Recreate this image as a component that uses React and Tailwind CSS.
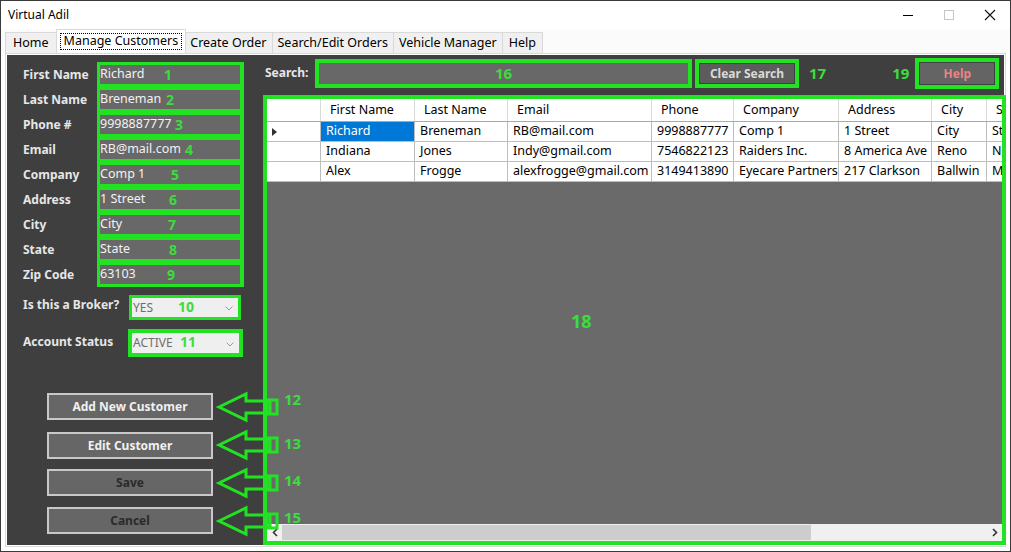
import React from "react";

const G = "border-[#22e322]";

const fields = [
  ["First Name", "Richard", "1", "left-[64px]"],
  ["Last Name", "Breneman", "2", "left-[66px]"],
  ["Phone #", "9998887777", "3", "left-[75px]"],
  ["Email", "RB@mail.com", "4", "left-[85px]"],
  ["Company", "Comp 1", "5", "left-[71px]"],
  ["Address", "1 Street", "6", "left-[69px]"],
  ["City", "City", "7", "left-[68px]"],
  ["State", "State", "8", "left-[69px]"],
  ["Zip Code", "63103", "9", "left-[67px]"],
];

const cols = [
  ["First Name", "w-[94px]"],
  ["Last Name", "w-[93px]"],
  ["Email", "w-[144px]"],
  ["Phone", "w-[82px]"],
  ["Company", "w-[105px]"],
  ["Address", "w-[93px]"],
  ["City", "w-[55px]"],
  ["State", "w-[60px]"],
];

const rows = [
  ["Richard", "Breneman", "RB@mail.com", "9998887777", "Comp 1", "1 Street", "City", "State"],
  ["Indiana", "Jones", "Indy@gmail.com", "7546822123", "Raiders Inc.", "8 America Ave", "Reno", "Nevada"],
  ["Alex", "Frogge", "alexfrogge@gmail.com", "3149413890", "Eyecare Partners", "217 Clarkson", "Ballwin", "MO"],
];

function Arrow({ cy }) {
  return (
    <g fill="none" stroke="#22e322" strokeWidth="3" strokeLinejoin="miter">
      <polygon points={`6,${cy} 33,${cy - 13} 33,${cy - 6} 57,${cy - 6} 57,${cy + 6} 33,${cy + 6} 33,${cy + 13}`} />
      <rect x="54" y={cy - 7} width="10" height="14" />
    </g>
  );
}

export default function App() {
  return (
    <div className="w-[1011px] h-[552px] bg-white border border-[#3a3a3a] flex flex-col relative overflow-hidden font-['Noto_Sans',sans-serif] text-black">
      {/* Title bar */}
      <div className="h-[28px] flex items-center justify-between shrink-0">
        <div className="pl-[7px] text-[12px] font-['Noto_Sans',sans-serif]">Virtual Adil</div>
        <div className="flex h-full">
          <div className="w-[41px] flex items-center justify-center">
            <div className="w-[10px] h-px bg-black" />
          </div>
          <div className="w-[41px] flex items-center justify-center">
            <div className="w-[10px] h-[10px] border border-[#c6c6c6]" />
          </div>
          <div className="w-[41px] flex items-center justify-center">
            <svg width="12" height="12" viewBox="0 0 12 12">
              <path d="M1 1 L11 11 M11 1 L1 11" stroke="#111" strokeWidth="1.1" />
            </svg>
          </div>
        </div>
      </div>
      {/* Tabs */}
      <div className="h-[24px] flex items-end pl-[4px] shrink-0 bg-[#fbfbfb] text-[12.5px] leading-none">
        <div className="h-[21px] px-[7px] flex items-center bg-[#f0f0f0] border border-b-0 border-[#d9d9d9]">Home</div>
        <div className="h-[24px] px-[3px] flex items-center bg-white border border-b-0 border-[#d9d9d9] -mx-px relative z-10">
          <div className="px-[3px] h-[17px] flex items-center border border-dotted border-black">Manage Customers</div>
        </div>
        <div className="h-[21px] px-[5px] flex items-center bg-[#f0f0f0] border border-b-0 border-l-0 border-[#d9d9d9]">Create Order</div>
        <div className="h-[21px] px-[5px] flex items-center bg-[#f0f0f0] border border-b-0 border-l-0 border-[#d9d9d9]">Search/Edit Orders</div>
        <div className="h-[21px] px-[5px] flex items-center bg-[#f0f0f0] border border-b-0 border-l-0 border-[#d9d9d9]">Vehicle Manager</div>
        <div className="h-[21px] px-[6px] flex items-center bg-[#f0f0f0] border border-b-0 border-l-0 border-[#d9d9d9]">Help</div>
      </div>
      {/* Tab page */}
      <div className="flex-1 min-w-0 mx-[4px] mb-[4px] border border-[#d9d9d9] p-px bg-white flex">
        <div className="flex-1 min-w-0 bg-[#3f3f3f] flex relative">
          {/* Left panel */}
          <div className="w-[256px] shrink-0 flex flex-col pt-[7px] pl-[16px]">
            <div className="flex">
              <div className="w-[74px] flex flex-col pt-[3px] gap-[6px]">
                {fields.map((f) => (
                  <div key={f[0]} className="h-[19px] flex items-center text-[12px] font-bold text-[#e6e6e6]">{f[0]}</div>
                ))}
              </div>
              <div className={`w-[147px] border-y-[3px] border-x-[4px] ${G} bg-[#22e322] flex flex-col gap-[6px]`}>
                {fields.map((f) => (
                  <div key={f[0]} className="h-[19px] bg-[#686868] relative flex items-center -ml-px">
                    <span className="text-[12.5px] text-[#f2f2f2] leading-none">{f[1]}</span>
                    <span className={`absolute ${f[3]} top-[3px] text-[14px] font-bold text-[#3ddc3d] leading-none`}>{f[2]}</span>
                  </div>
                ))}
              </div>
            </div>
            {/* Broker */}
            <div className="flex items-center mt-[8px] h-[25px]">
              <div className="w-[106px] text-[12px] font-bold text-[#e6e6e6] -mt-[5px]">Is this a Broker?</div>
              <div className={`w-[112px] h-[25px] border-[3px] ${G} bg-[#efefef] flex items-center relative`}>
                <span className="pl-[1px] text-[12px] text-[#6e6e6e]">YES</span>
                <span className="absolute left-[46px] top-[2px] text-[14px] font-bold text-[#3ddc3d] leading-none">10</span>
                <svg className="absolute right-[5px] top-[8px]" width="8" height="5" viewBox="0 0 8 5">
                  <path d="M0.5 0.5 L4 4 L7.5 0.5" fill="none" stroke="#9a9a9a" strokeWidth="1" />
                </svg>
              </div>
            </div>
            <div className="flex items-center mt-[9px] h-[28px]">
              <div className="w-[105px] text-[12px] font-bold text-[#e6e6e6] -mt-[3px]">Account Status</div>
              <div className={`w-[115px] h-[28px] border-[4px] ${G} bg-[#efefef] flex items-center relative`}>
                <span className="pl-[1px] text-[12px] text-[#6e6e6e]">ACTIVE</span>
                <span className="absolute left-[48px] top-[2px] text-[14px] font-bold text-[#3ddc3d] leading-none">11</span>
                <svg className="absolute right-[5px] top-[9px]" width="8" height="5" viewBox="0 0 8 5">
                  <path d="M0.5 0.5 L4 4 L7.5 0.5" fill="none" stroke="#9a9a9a" strokeWidth="1" />
                </svg>
              </div>
            </div>
            {/* Buttons */}
            <div className="flex flex-col pl-[24px] mt-[36px]">
              <button className="w-[166px] h-[27px] bg-[#666666] border-2 border-[#c8c8c8] text-[12px] font-bold text-[#f0f0f0]">Add New Customer</button>
              <button className="w-[166px] h-[27px] mt-[12px] bg-[#666666] border-2 border-[#c8c8c8] text-[12px] font-bold text-[#f0f0f0]">Edit Customer</button>
              <button className="w-[166px] h-[27px] mt-[10px] bg-[#666666] border-2 border-[#c8c8c8] text-[12px] font-bold text-[#2a2a2a]">Save</button>
              <button className="w-[166px] h-[27px] mt-[11px] bg-[#666666] border-2 border-[#c8c8c8] text-[12px] font-bold text-[#2a2a2a]">Cancel</button>
            </div>
          </div>
          {/* Right area */}
          <div className="flex-1 min-w-0 flex flex-col -mr-[2px]">
            <div className="flex items-center h-[31px] mt-[3px] relative">
              <div className="w-[52px] pl-[2px] text-[12px] font-bold text-[#e6e6e6] -mt-[2px]">Search:</div>
              <div className={`w-[377px] h-[29px] border-[4px] ${G} bg-[#686868] flex items-center justify-center`}>
                <span className="text-[15px] font-bold text-[#3ddc3d] leading-none">16</span>
              </div>
              <div className={`ml-[3px] w-[104px] h-[29px] border-[4px] ${G} p-[1px] flex`}>
                <div className="flex-1 bg-[#5c5c5c] flex items-center justify-center text-[12px] font-bold text-[#d9d9d9] leading-none">Clear Search</div>
              </div>
              <span className="ml-[10px] text-[15px] font-bold text-[#3ddc3d] leading-none">17</span>
              <span className="ml-[66px] text-[15px] font-bold text-[#3ddc3d] leading-none">19</span>
              <div className={`ml-[6px] w-[84px] h-[31px] border-[4px] ${G} p-[1px] flex`}>
                <div className="flex-1 bg-[#646464] flex items-center justify-center text-[12px] font-bold text-[#e68585] leading-none">Help</div>
              </div>
            </div>
            {/* Grid */}
            <div className={`mt-[6px] flex-1 min-w-0 border-[4px] ${G} bg-[#6a6a6a] flex flex-col relative overflow-hidden`}>
              <div className="flex-1 min-w-0 overflow-hidden relative">
                <div className="flex bg-white h-[23px] border-b border-[#a9a9a9] text-[12.5px] w-[900px]">
                  <div className="w-[54px] shrink-0 border-r border-[#dadada]" />
                  {cols.map((c) => (
                    <div key={c[0]} className={`${c[1]} shrink-0 border-r border-[#dadada] pl-[9px] flex items-center whitespace-nowrap overflow-hidden`}>{c[0]}</div>
                  ))}
                </div>
                {rows.map((r, i) => (
                  <div key={i} className="flex bg-white h-[20px] border-b border-[#bdbdbd] text-[12.5px] w-[900px]">
                    <div className="w-[54px] shrink-0 border-r border-[#bdbdbd] flex items-center pl-[5px]">
                      {i === 0 && (
                        <svg width="5" height="8" viewBox="0 0 5 8"><path d="M0 0 L5 4 L0 8Z" fill="#333" /></svg>
                      )}
                    </div>
                    {r.map((v, j) => (
                      <div key={j} className={`${cols[j][1]} shrink-0 border-r border-[#bdbdbd] pl-[5px] flex items-center whitespace-nowrap overflow-hidden ${i === 0 && j === 0 ? "bg-[#0078d7] text-white" : ""}`}>{v}</div>
                    ))}
                  </div>
                ))}
                <div className="flex pl-[304px] mt-[130px]">
                  <span className="text-[18px] font-bold text-[#3ddc3d] leading-none">18</span>
                </div>
              </div>
              {/* scrollbar */}
              <div className="h-[17px] bg-[#f0f0f0] flex items-center shrink-0">
                <div className="w-[15px] flex items-center justify-center">
                  <svg width="6" height="9" viewBox="0 0 6 9"><path d="M5 1 L1.5 4.5 L5 8" fill="none" stroke="#333" strokeWidth="1.6" /></svg>
                </div>
                <div className="w-[529px] h-[15px] bg-[#cdcdcd]" />
                <div className="flex-1" />
                <div className="w-[15px] flex items-center justify-center">
                  <svg width="6" height="9" viewBox="0 0 6 9"><path d="M1 1 L4.5 4.5 L1 8" fill="none" stroke="#333" strokeWidth="1.6" /></svg>
                </div>
              </div>
            </div>
          </div>
          {/* Annotation arrows */}
          <svg className="absolute left-[206px] top-[331px]" width="75" height="160" viewBox="0 0 75 160">
            <Arrow cy={21} />
            <Arrow cy={59} />
            <Arrow cy={97} />
            <Arrow cy={135} />
          </svg>
          <div className="absolute left-[277px] top-[337px] flex flex-col text-[15px] font-bold text-[#3ddc3d] leading-none">
            <span>12</span>
            <span className="mt-[29px]">13</span>
            <span className="mt-[22px]">14</span>
            <span className="mt-[22px]">15</span>
          </div>
        </div>
      </div>
    </div>
  );
}
